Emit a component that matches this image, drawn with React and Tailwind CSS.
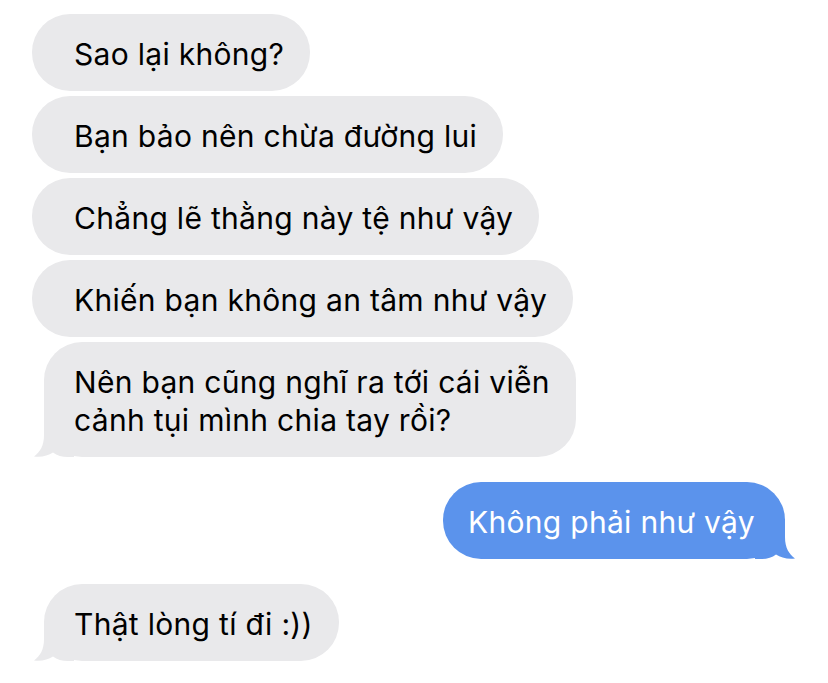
import React from 'react';

const GRAY = '#e9e9eb';
const BLUE = '#5b93ec';

const TailLeft = () => (
  <svg className="absolute -left-[10px] bottom-0" width="40" height="40" viewBox="0 0 40 40">
    <path
      d="M10 0 L10 18 C10 29 6 35 0 39.5 C8 40.5 14 38.5 19 35.5 C23 38.8 28 40 34 40 L40 40 L40 0 Z"
      fill={GRAY}
    />
  </svg>
);

const TailRight = () => (
  <svg className="absolute -right-[10px] bottom-0" width="40" height="40" viewBox="0 0 40 40">
    <path
      d="M30 0 L30 18 C30 29 34 35 40 39.5 C32 40.5 26 38.5 21 35.5 C17 38.8 12 40 6 40 L0 40 L0 0 Z"
      fill={BLUE}
    />
  </svg>
);

const Received = ({ lines, tail }) => (
  <div className={tail ? 'flex ml-[44px]' : 'flex ml-[32px]'}>
    <div
      className={`relative bg-[#e9e9eb] rounded-[38px] pt-[21px] pb-[18px] pr-[26px] text-black ${
        tail ? 'pl-[30px]' : 'pl-[42px]'
      }`}
    >
      {lines.map((l) => (
        <div key={l} className="relative z-10">{l}</div>
      ))}
      {tail && <TailLeft />}
    </div>
  </div>
);

const Sent = ({ text }) => (
  <div className="flex justify-end mr-[43px]">
    <div className="relative bg-[#5b93ec] rounded-[38px] pt-[21px] pb-[18px] pl-[25px] pr-[30px] text-white">
      <div className="relative z-10">{text}</div>
      <TailRight />
    </div>
  </div>
);

export default function App() {
  return (
    <div
      className="w-[828px] h-[683px] bg-white overflow-hidden pt-[14px] text-[30px] leading-[38px] tracking-[0.3px]"
      style={{ fontFamily: 'Inter, "Noto Sans", sans-serif' }}
    >
      <div className="flex flex-col gap-[5px]">
        <Received lines={['Sao lại không?']} />
        <Received lines={['Bạn bảo nên chừa đường lui']} />
        <Received lines={['Chẳng lẽ thằng này tệ như vậy']} />
        <Received lines={['Khiến bạn không an tâm như vậy']} />
        <Received tail lines={['Nên bạn cũng nghĩ ra tới cái viễn', 'cảnh tụi mình chia tay rồi?']} />
      </div>
      <div className="mt-[25px]">
        <Sent text="Không phải như vậy" />
      </div>
      <div className="mt-[25px]">
        <Received tail lines={['Thật lòng tí đi :))']} />
      </div>
    </div>
  );
}
